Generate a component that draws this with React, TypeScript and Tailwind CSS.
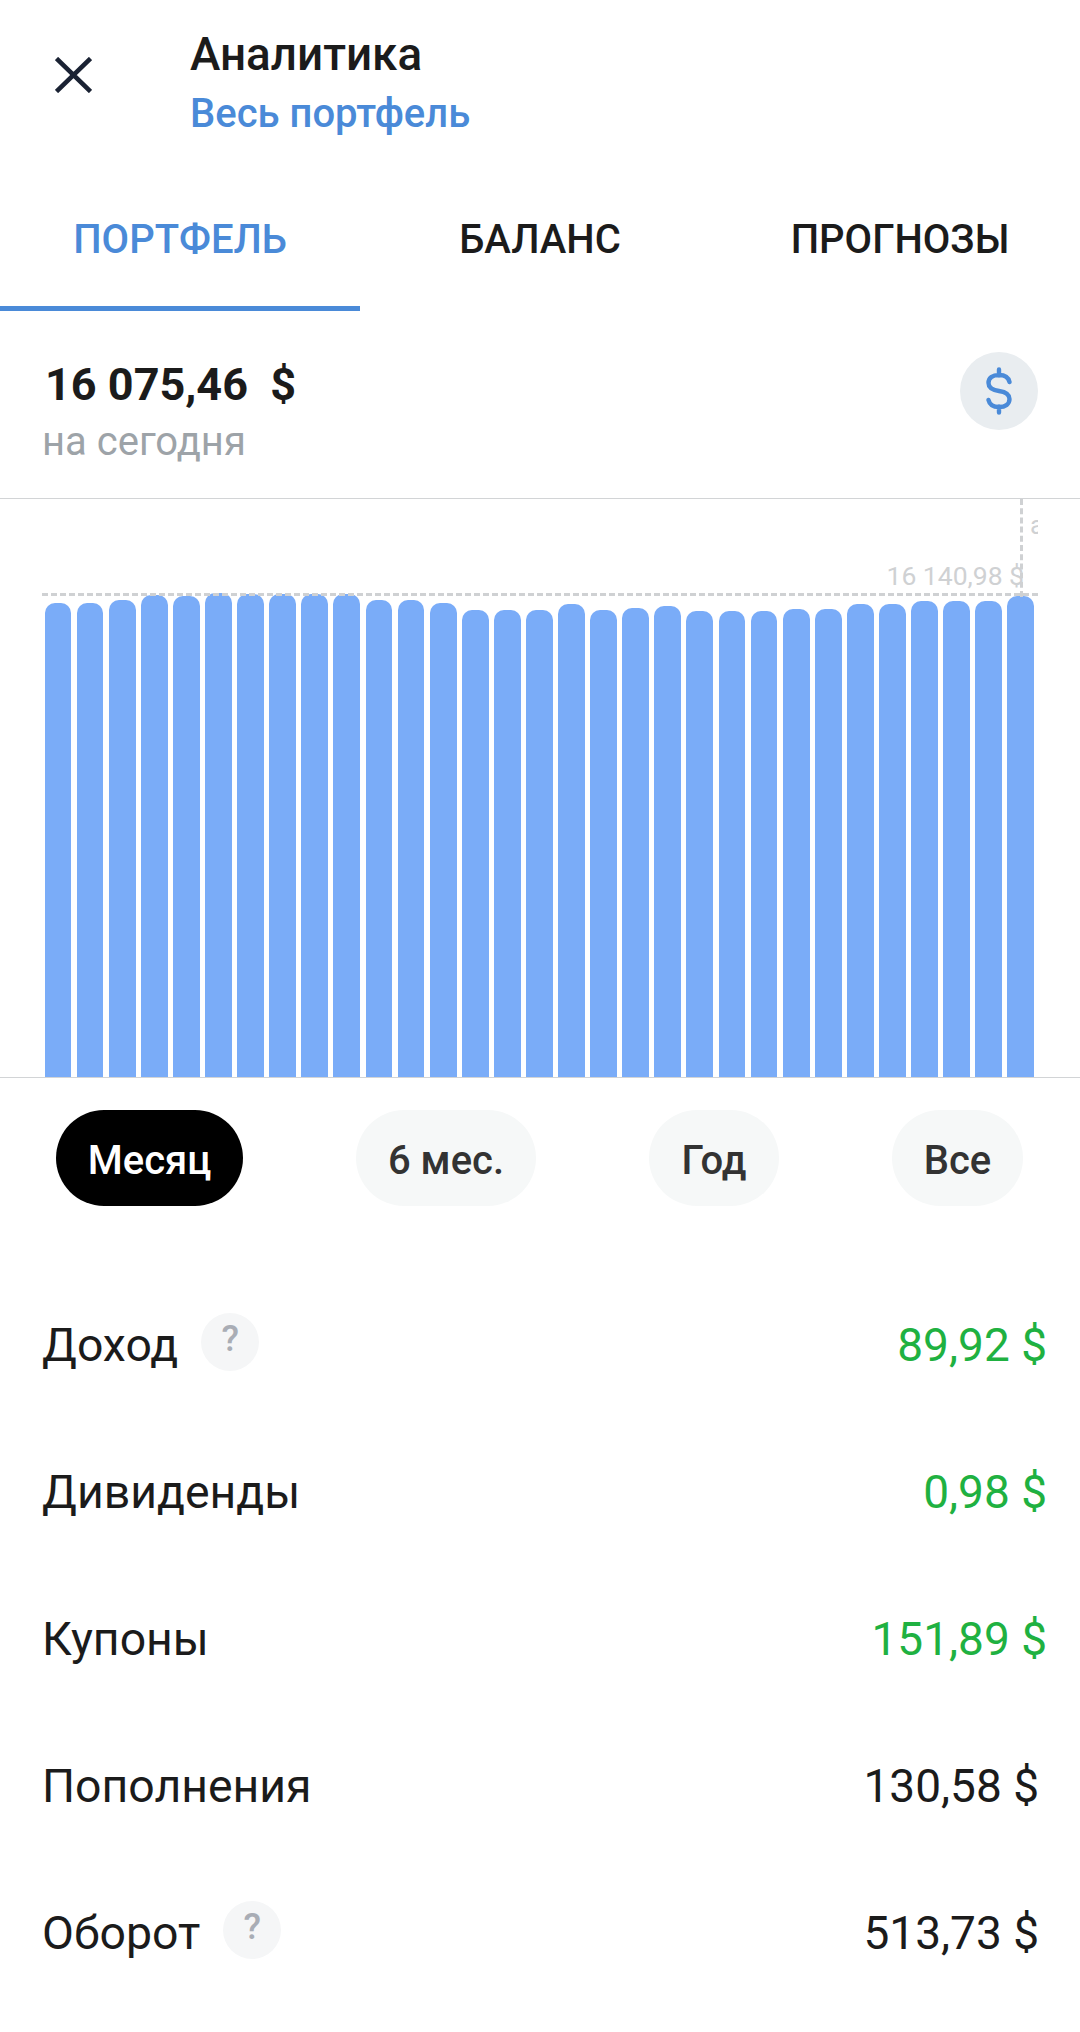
const tops = [603, 603, 600, 595, 596, 593, 593.5, 593.5, 593.5, 593.5, 600, 600, 603, 610, 609.5, 609.5, 603.5, 610, 607.5, 606, 611, 611, 611, 609, 608.5, 604, 604, 601, 601, 601, 596];

function Help() {
  return (
    <span className="mb-[5px] ml-[23px] flex h-[58px] w-[58px] items-center justify-center rounded-full bg-[#f5f6f7] pb-[6px] text-[36px] font-medium text-[#a9adb5]">?</span>
  );
}

function Row({ label, value, green, help }: { label: string; value: string; green?: boolean; help?: boolean }) {
  return (
    <div className="flex h-[147px] items-center justify-between pl-[42px]">
      <div className="flex items-center">
        <span className="text-[46.4px] leading-[58px] text-[#1b1b1b]">{label}</span>
        {help && <Help />}
      </div>
      <span className={green ? "pr-[33px] text-[46px] leading-[58px] text-[#1fb141]" : "pr-[41px] text-[46px] leading-[58px] text-[#1b1b1b]"}>{value}</span>
    </div>
  );
}

function Chip({ label, active, width }: { label: string; active?: boolean; width: string }) {
  return (
    <div className={`flex h-[96px] items-center justify-center rounded-full pt-[5px] text-[40px] font-medium ${width} ${active ? "bg-black text-white" : "bg-[#f6f8f8] text-[#333]"}`}>
      {label}
    </div>
  );
}

export default function App() {
  return (
    <div className="h-[2032px] w-[1080px] overflow-hidden bg-white font-['Roboto',sans-serif]">
      <header className="flex h-[130px] items-start pl-[55px]">
        <svg width="37" height="36" viewBox="0 0 37 36" className="mt-[57px] shrink-0" fill="none" stroke="#1a2233" strokeWidth="4.6">
          <path d="M1.5 1.5 35.5 34.5M35.5 1.5 1.5 34.5" />
        </svg>
        <div className="ml-[98px] pt-[27px]">
          <div className="text-[45.8px] font-medium leading-[56px] text-[#1b1b1b]">Аналитика</div>
          <div className="mt-[2px] text-[40px] font-medium leading-[58px] text-[#4a8ad8]">Весь портфель</div>
        </div>
      </header>
      <nav className="flex h-[181px] text-[40px] font-medium">
        <div className="flex w-[360px] items-center justify-center border-b-[5px] border-[#4a8ad8] pt-[44px] text-[#4a8ad8]">ПОРТФЕЛЬ</div>
        <div className="flex w-[360px] items-center justify-center pt-[39px] text-[#1b1b1b]">БАЛАНС</div>
        <div className="flex w-[360px] items-center justify-center pt-[39px] text-[#1b1b1b]">ПРОГНОЗЫ</div>
      </nav>
      <section className="flex h-[188px] items-start justify-between border-b border-[#d2d4d6] pl-[42px] pr-[42px]">
        <div>
          <div className="mt-[46px] pl-[3px] text-[45px] font-bold leading-[56px] text-[#1b1b1b] whitespace-pre">16 075,46  $</div>
          <div className="text-[40px] leading-[58px] text-[#9da3a8]">на сегодня</div>
        </div>
        <div className="mt-[41px] flex h-[78px] w-[78px] items-center justify-center rounded-full bg-[#e9edf0]">
          <svg width="26" height="48" viewBox="0 0 26 48" fill="none" stroke="#4a8ad8" strokeWidth="4.4" strokeLinecap="round">
            <path d="M13 2.5v6M13 39.5v6M23.5 15C22.5 10.5 18.5 8 13 8 6.5 8 2.5 11 2.5 16 2.5 21 6.5 23 13 24 19.5 25 23.5 27 23.5 32 23.5 37 19.5 40 13 40 7 40 3.5 37.5 2.5 33" />
          </svg>
        </div>
      </section>
      <section className="relative h-[579px] border-b border-[#d2d4d6]">
        <div className="absolute bottom-0 left-[44.6px] flex h-full items-end gap-[5.3px]">
          {tops.map((t, i) => (
            <div key={i} className="w-[26.8px] rounded-t-[10px] bg-[#7aacf8]" style={{ height: 1077 - t }} />
          ))}
        </div>
        <div className="absolute left-[42px] top-[94px] w-[996px] border-t-[3px] border-dashed border-[#cfd1d3]" />
        <div className="absolute left-[1020px] top-0 h-[98px] border-l-[3px] border-dashed border-[#cfd1d3]" />
        <div className="absolute right-[56px] top-[59px] text-[26.5px] leading-[36px] text-[#cfd1d3]">16 140,98 $</div>
        <div className="absolute left-[1030px] top-[8px] w-[8px] overflow-hidden text-[26px] leading-[36px] text-[#cfd1d3]">а</div>
      </section>
      <section className="flex justify-between pl-[56px] pr-[57px] pt-[32px]">
        <Chip label="Месяц" active width="w-[187px]" />
        <Chip label="6 мес." width="w-[180px]" />
        <Chip label="Год" width="w-[130px]" />
        <Chip label="Все" width="w-[131px]" />
      </section>
      <section className="mt-[65px]">
        <Row label="Доход" value="89,92 $" green help />
        <Row label="Дивиденды" value="0,98 $" green />
        <Row label="Купоны" value="151,89 $" green />
        <Row label="Пополнения" value="130,58 $" />
        <Row label="Оборот" value="513,73 $" help />
      </section>
    </div>
  );
}
